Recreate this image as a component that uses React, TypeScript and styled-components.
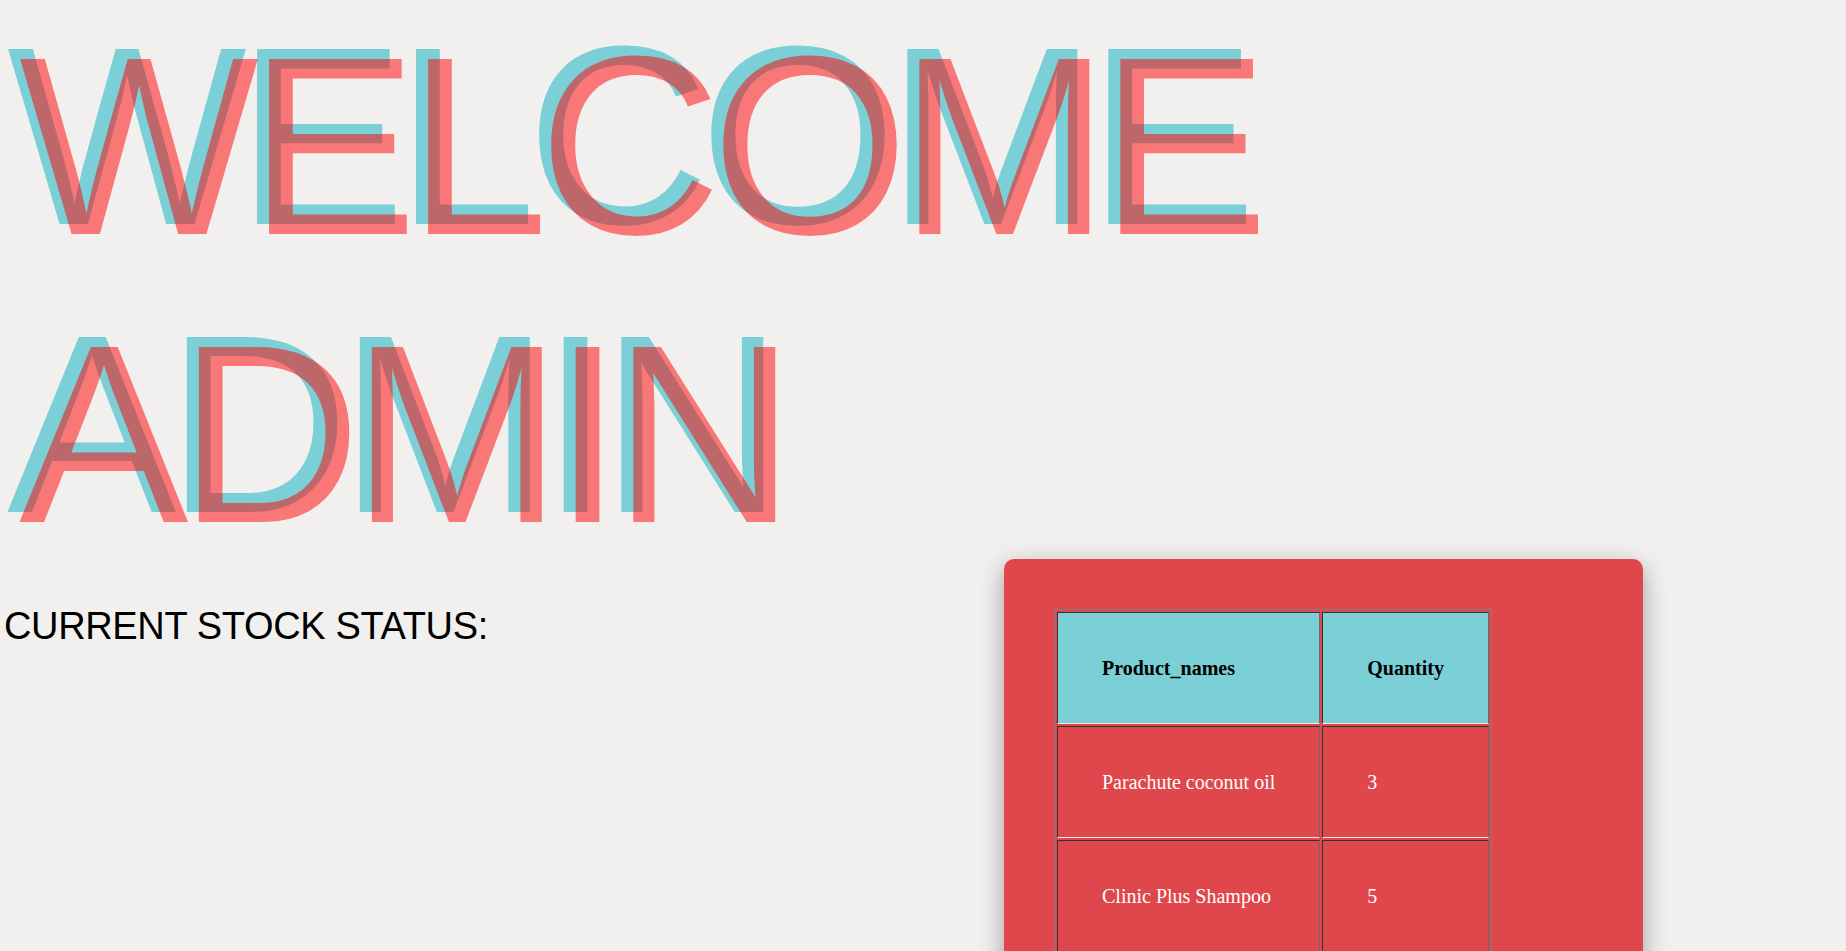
import styled, { createGlobalStyle } from "styled-components";

const GlobalStyle = createGlobalStyle`
    body {
        margin: 0;
        background: #f2f0ee;
        font-family: "Liberation Sans", Arial, sans-serif;
    }
`;

const Page = styled.div`
    display: flex;
    flex-direction: column;
`;

const Welcome = styled.h1`
    margin: 0 0 -19px 0;
    padding: 2px 0 0 19px;
    font-family: "Liberation Sans", Arial, sans-serif;
    font-size: 254px;
    font-weight: normal;
    line-height: 288px;
    letter-spacing: -10.4px;
    color: rgba(255, 0, 0, 0.5);
    text-shadow: -12px -10px 0 #7bcfd6;
`;

const Section = styled.section`
    display: flex;
    align-items: flex-start;
`;

const StatusLabel = styled.h2`
    flex: 0 0 1004px;
    box-sizing: border-box;
    margin: 46px 0 0 0;
    padding-left: 4px;
    font-size: 38px;
    font-weight: normal;
    letter-spacing: -0.35px;
    color: #000;
`;

const Card = styled.div`
    width: 639px;
    box-sizing: border-box;
    padding: 50px;
    background: #e0474d;
    border-radius: 10px;
    box-shadow: 0 8px 24px rgba(0, 0, 0, 0.35);
`;

const StockTable = styled.table`
    border: 1px solid #808080;
    border-spacing: 2px;
    font-family: "Liberation Serif", "Times New Roman", serif;
    font-size: 20px;
`;

const Cell = styled.td<{ $head?: boolean }>`
    padding: 43.5px 44px;
    text-align: left;
    border-top: 1px solid #333;
    border-left: 1px solid #333;
    border-right: 1px solid #6a6a6a;
    border-bottom: 1px solid #f2e6e6;
    background: ${(p) => (p.$head ? "#7bcfd6" : "transparent")};
    color: ${(p) => (p.$head ? "#000" : "#fff")};
    font-weight: ${(p) => (p.$head ? "bold" : "normal")};
`;

const stock = [
    { name: "Parachute coconut oil", qty: 3 },
    { name: "Clinic Plus Shampoo", qty: 5 },
];

export default function App() {
    return (
        <Page>
            <GlobalStyle />
            <Welcome>
                WELCOME
                <br />
                ADMIN
            </Welcome>
            <Section>
                <StatusLabel>CURRENT STOCK STATUS:</StatusLabel>
                <Card>
                    <StockTable>
                        <thead>
                            <tr>
                                <Cell as="th" $head>Product_names</Cell>
                                <Cell as="th" $head>Quantity</Cell>
                            </tr>
                        </thead>
                        <tbody>
                            {stock.map((item) => (
                                <tr key={item.name}>
                                    <Cell>{item.name}</Cell>
                                    <Cell>{item.qty}</Cell>
                                </tr>
                            ))}
                        </tbody>
                    </StockTable>
                </Card>
            </Section>
        </Page>
    );
}
